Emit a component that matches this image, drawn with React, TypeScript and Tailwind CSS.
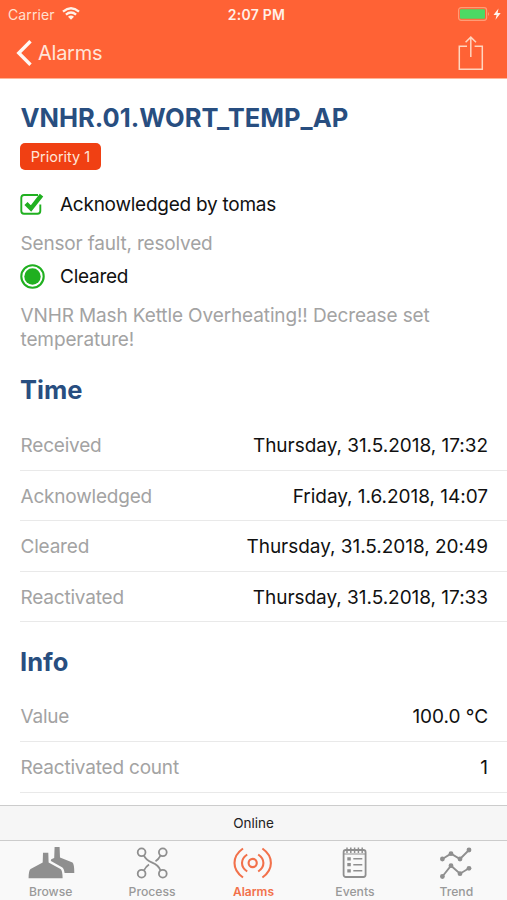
import { ReactNode } from 'react';

const timeRows = [
    { label: 'Received', value: 'Thursday, 31.5.2018, 17:32' },
    { label: 'Acknowledged', value: 'Friday, 1.6.2018, 14:07' },
    { label: 'Cleared', value: 'Thursday, 31.5.2018, 20:49' },
    { label: 'Reactivated', value: 'Thursday, 31.5.2018, 17:33' },
];

const infoRows = [
    { label: 'Value', value: '100.0 °C' },
    { label: 'Reactivated count', value: '1' },
];

const WifiIcon = () => (
    <svg className="mb-px ml-[7px] h-[13px] w-[18px]" viewBox="0 0 18 13" fill="none" stroke="#fff2e8" strokeWidth="2.3">
        <path d="M1 4.6Q9-2.2 17 4.6" />
        <path d="M3.9 7.7Q9 3.4 14.1 7.7" />
        <path d="M6 9.7Q9 7.2 12 9.7L9 12.8Z" fill="#fff2e8" stroke="none" />
    </svg>
);

const BatteryIcon = () => (
    <svg className="h-[14px] w-[44px]" viewBox="0 0 44 14">
        <rect x="0.6" y="0.7" width="28" height="12.6" rx="2.5" fill="none" stroke="#ff9c76" strokeWidth="1.2" />
        <rect x="2" y="2.2" width="25" height="9.6" rx="1" fill="#4cd964" />
        <path d="M30 5Q32 7 30 9Z" fill="#ff9c76" />
        <path d="M40.5 1.5L35.5 8H38.6L37.5 12.8L42.7 6H39.6Z" fill="#fff4ee" />
    </svg>
);

const ShareIcon = () => (
    <svg className="h-[35px] w-[26px]" viewBox="0 0 26 35" fill="none" stroke="#ffd5bf" strokeWidth="1.5">
        <path d="M9 10.2H1.3V33.2H24.3V10.2H16.6" />
        <path d="M12.8 21V1.2M7.6 6.3L12.8 1.1L18 6.3" />
    </svg>
);

const BrowseIcon = () => (
    <svg className="h-[34px] w-[48px]" viewBox="0 0 48 34" fill="#8f8f8f">
        <path d="M16 6.7H21.3L21.6 16.5L33.5 23Q35.5 24.3 35.6 32.3H1.6Q1.6 24.3 3.6 23L15.7 16.5Z" />
        <path d="M27.6 1H32.6L33 11.5L45.5 16.5Q47.3 18 47.3 27H37.6Q37 22.5 35 21.3L24 15Q23 13.2 27.2 12Z" />
    </svg>
);

const ProcessIcon = () => (
    <svg className="h-[34px] w-[34px]" viewBox="0 0 34 34" fill="none" stroke="#8f8f8f" strokeWidth="1.8">
        <circle cx="6.6" cy="6.3" r="3.9" />
        <circle cx="27.8" cy="6.3" r="3.9" />
        <circle cx="6.6" cy="27.7" r="3.9" />
        <circle cx="27.8" cy="27.7" r="3.9" />
        <path d="M9 9.6Q11 14.2 17.2 16.7T25.5 24.3" />
        <path d="M25.5 9.6Q23.5 13.5 20.5 15.2M14 18.5Q11 20.5 9 24.3" />
    </svg>
);

const AlarmsIcon = () => (
    <svg className="h-[34px] w-[40px]" viewBox="0 0 40 34" fill="none" stroke="#f2714b" strokeWidth="2.1">
        <circle cx="19.7" cy="17" r="4.1" />
        <path d="M10 2.5Q1.5 8.5 1.5 17T10 31.5" />
        <path d="M29.4 2.5Q37.9 8.5 37.9 17T29.4 31.5" />
        <path d="M14.2 8.5Q9 12 9 17T14.2 25.5" />
        <path d="M25.2 8.5Q30.4 12 30.4 17T25.2 25.5" />
    </svg>
);

const EventsIcon = () => (
    <svg className="h-[34px] w-[26px]" viewBox="0 0 26 34" fill="none" stroke="#8f8f8f" strokeWidth="1.8">
        <rect x="1.6" y="4" width="22" height="27" rx="2.2" />
        <path d="M2 8H23" strokeWidth="1" />
        <path d="M5 1.5V7M8.8 1.5V7M12.6 1.5V7M16.4 1.5V7M20.2 1.5V7" strokeWidth="1.5" />
        <path d="M11.3 12.8H20.3M11.3 18.7H20.3M11.3 24.8H20.3" strokeWidth="1.6" />
        <path d="M5.3 12.8H8.8M5.3 18.7H8.8M5.3 24.8H8.8" strokeWidth="3.3" />
    </svg>
);

const TrendIcon = () => (
    <svg className="h-[34px] w-[34px]" viewBox="0 0 34 34" fill="#8f8f8f" stroke="#8f8f8f" strokeWidth="1.9">
        <path d="M3.4 13L12 7.7L21 13L30 4M3.4 30.5L12 19.7L21 27.7L30 22.3" fill="none" />
        <g stroke="none">
            <circle cx="3.4" cy="13" r="2.4" />
            <circle cx="12" cy="7.7" r="2.4" />
            <circle cx="21" cy="13" r="2.4" />
            <circle cx="30" cy="4" r="2.4" />
            <circle cx="3.4" cy="30.5" r="2.4" />
            <circle cx="12" cy="19.7" r="2.4" />
            <circle cx="21" cy="27.7" r="2.4" />
            <circle cx="30" cy="22.3" r="2.4" />
        </g>
    </svg>
);

const tabs = [
    { name: 'Browse', icon: <BrowseIcon /> },
    { name: 'Process', icon: <ProcessIcon /> },
    { name: 'Alarms', icon: <AlarmsIcon />, active: true },
    { name: 'Events', icon: <EventsIcon /> },
    { name: 'Trend', icon: <TrendIcon /> },
];

const SectionTitle = ({ children }: { children: ReactNode }) => (
    <h2 className="text-[25.5px] leading-[32px] font-bold text-[#284e80]">{children}</h2>
);

const Row = ({ label, value }: { label: string; value: string }) => (
    <div className="flex h-[50.6px] items-center justify-between border-b border-[#e9e9e9] pt-[3px] pr-[19px] pl-[0.5px] text-[19px]">
        <span className="tracking-[-0.2px] text-[#a3a3a3]">{label}</span>
        <span className="tracking-[-0.03px] text-[#111111]">{value}</span>
    </div>
);

const App = () => {
    return (
        <div className="flex h-[900px] w-[507px] flex-col overflow-hidden bg-white font-['Inter',sans-serif]">
            <header className="h-[79px] shrink-0 border-b border-[#ffb597] bg-[#ff6235]">
                <div className="grid h-[28px] grid-cols-3 items-center pr-[5px] pl-[8px] text-[14px]">
                    <div className="flex items-center text-[#ffe0d0]">
                        <span className="tracking-[0.1px]">Carrier</span>
                        <WifiIcon />
                    </div>
                    <span className="pl-[3px] text-center font-semibold tracking-[0.25px] text-[#fff0e8]">2:07 PM</span>
                    <div className="flex justify-end">
                        <BatteryIcon />
                    </div>
                </div>
                <div className="flex h-[50px] items-center justify-between pr-[23px] pl-[16px]">
                    <button className="flex items-center text-[20px] tracking-[-0.25px] text-[#ffe5d8]">
                        <svg className="mr-[6px] h-[26px] w-[16px]" viewBox="0 0 16 26" fill="none" stroke="#fff8f3" strokeWidth="3.4">
                            <path d="M14.5 1.3L2.8 13L14.5 24.7" />
                        </svg>
                        Alarms
                    </button>
                    <ShareIcon />
                </div>
            </header>

            <main className="min-h-0 flex-1 overflow-hidden pl-[20px]">
                <h1 className="mt-[23px] pl-[0.5px] text-[25.5px] leading-[32px] font-bold text-[#284e80]">VNHR.01.WORT_TEMP_AP</h1>
                <div className="mt-[9px] flex h-[27px] w-[81px] items-center justify-center rounded-[5px] bg-[#f04013] pt-px text-[14.5px] text-[#ffe5d8]">
                    Priority 1
                </div>
                <div className="mt-[22px] flex h-[24px] items-center text-[19px] tracking-[-0.25px] text-[#111111]">
                    <svg className="mr-[16px] h-[24px] w-[24px]" viewBox="0 0 24 24" fill="none" stroke="#20b020">
                        <path d="M18 3H4Q1.3 3 1.3 5.7V19Q1.3 21.7 4 21.7H17.5Q20.3 21.7 20.3 19V12.5" strokeWidth="1.9" />
                        <path d="M6 11.5L11 16.5L21.5 3.2" strokeWidth="4.4" />
                    </svg>
                    <span className="pt-[3px]">Acknowledged by tomas</span>
                </div>
                <p className="mt-[16px] pl-[0.5px] text-[19px] leading-[24px] tracking-[-0.18px] text-[#a3a3a3]">
                    Sensor fault, resolved
                </p>
                <div className="mt-[7px] flex h-[26px] items-center text-[19px] tracking-[-0.25px] text-[#111111]">
                    <svg className="mr-[15px] h-[25px] w-[25px]" viewBox="0 0 25 25" fill="#20b020">
                        <circle cx="12.5" cy="12.5" r="8.2" />
                        <circle cx="12.5" cy="12.5" r="11.2" fill="none" stroke="#20b020" strokeWidth="2.1" />
                    </svg>
                    <span className="pt-[3px]">Cleared</span>
                </div>
                <p className="mt-[15px] w-[430px] pl-[0.5px] text-[19px] leading-[23.5px] tracking-[-0.12px] text-[#a3a3a3]">
                    VNHR Mash Kettle Overheating!! Decrease set temperature!
                </p>

                <div className="mt-[23px]">
                    <SectionTitle>Time</SectionTitle>
                    <div className="mt-[14px]">
                        {timeRows.map((row) => (
                            <Row key={row.label} label={row.label} value={row.value} />
                        ))}
                    </div>
                </div>

                <div className="mt-[24px]">
                    <SectionTitle>Info</SectionTitle>
                    <div className="mt-[13px]">
                        {infoRows.map((row) => (
                            <Row key={row.label} label={row.label} value={row.value} />
                        ))}
                    </div>
                </div>
            </main>

            <div className="flex h-[35px] shrink-0 items-center justify-center border-t border-[#cccccc] bg-[#f6f6f6] text-[13.5px] text-[#222222]">
                Online
            </div>
            <nav className="grid h-[60px] shrink-0 grid-cols-5 border-t border-[#cccccc] bg-[#f9f9f9]">
                {tabs.map((tab) => (
                    <div key={tab.name} className="flex flex-col items-center pt-[5px]">
                        {tab.icon}
                        <span
                            className={
                                tab.active
                                    ? 'mt-[4px] text-[12px] leading-[16px] font-semibold text-[#f2714b]'
                                    : 'mt-[4px] text-[12.2px] leading-[16px] font-medium text-[#999999]'
                            }
                        >
                            {tab.name}
                        </span>
                    </div>
                ))}
            </nav>
        </div>
    );
};

export default App;
